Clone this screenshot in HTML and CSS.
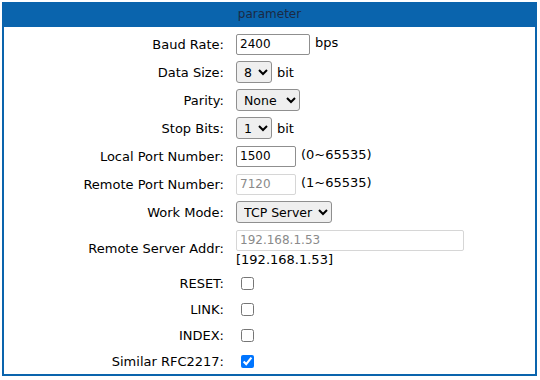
FILE: index.html
```html
<!doctype html>
<html lang="en">
  <head>
    <meta charset="UTF-8" />
    <meta name="viewport" content="width=device-width, initial-scale=1.0" />
    <title>Serial parameter</title>
    <link rel="stylesheet" href="styles.css">
  </head>
  <body>
    <div class="panel">
      <div class="panel-title">parameter</div>
      <form class="params">
        <div class="row">
          <label for="baud">Baud Rate:</label>
          <div class="field">
            <input type="text" id="baud" class="w-baud" value="2400" />
            <span class="unit raised">bps</span>
          </div>
        </div>
        <div class="row">
          <label for="datasize">Data Size:</label>
          <div class="field">
            <select id="datasize" class="w-small"><option>8</option><option>7</option></select>
            <span class="unit">bit</span>
          </div>
        </div>
        <div class="row">
          <label for="parity">Parity:</label>
          <div class="field">
            <select id="parity" class="w-parity"><option>None</option><option>Odd</option><option>Even</option></select>
          </div>
        </div>
        <div class="row">
          <label for="stopbits">Stop Bits:</label>
          <div class="field">
            <select id="stopbits" class="w-small"><option>1</option><option>2</option></select>
            <span class="unit">bit</span>
          </div>
        </div>
        <div class="row">
          <label for="localport">Local Port Number:</label>
          <div class="field">
            <input type="text" id="localport" class="w-port" value="1500" />
            <span class="unit raised">(0~65535)</span>
          </div>
        </div>
        <div class="row">
          <label for="remoteport">Remote Port Number:</label>
          <div class="field">
            <input type="text" id="remoteport" class="w-port" value="7120" disabled />
            <span class="unit raised">(1~65535)</span>
          </div>
        </div>
        <div class="row">
          <label for="workmode">Work Mode:</label>
          <div class="field">
            <select id="workmode" class="w-mode"><option>TCP Server</option><option>TCP Client</option><option>UDP</option></select>
          </div>
        </div>
        <div class="row row-tall">
          <label for="remoteaddr">Remote Server Addr:</label>
          <div class="field stack">
            <input type="text" id="remoteaddr" class="w-addr" value="192.168.1.53" disabled />
            <span class="current">[192.168.1.53]</span>
          </div>
        </div>
        <div class="row row-check">
          <label for="reset">RESET:</label>
          <div class="field"><input type="checkbox" id="reset" /></div>
        </div>
        <div class="row row-check">
          <label for="link">LINK:</label>
          <div class="field"><input type="checkbox" id="link" /></div>
        </div>
        <div class="row row-check">
          <label for="index">INDEX:</label>
          <div class="field"><input type="checkbox" id="index" /></div>
        </div>
        <div class="row row-check">
          <label for="rfc2217">Similar RFC2217:</label>
          <div class="field"><input type="checkbox" id="rfc2217" checked /></div>
        </div>
      </form>
    </div>
  </body>
</html>
```

FILE: styles.css
```css
body {
  margin: 0;
  padding: 2px;
  font-family: "DejaVu Sans", Verdana, sans-serif;
  font-size: 13px;
  color: #000;
  background-color: #fff;
}

.panel {
  width: 531px;
  border: 2px solid #0a64ad;
  border-top: none;
}

.panel-title {
  height: 25px;
  line-height: 25px;
  background-color: #0a64ad;
  color: #1b2a44;
  font-size: 12px;
  text-align: center;
}

.params {
  margin: 0;
  padding-top: 3px;
}

.row {
  display: grid;
  grid-template-columns: 220px 1fr;
  column-gap: 12px;
  align-items: center;
  height: 28px;
}

.row label {
  text-align: right;
}

.row-tall {
  height: 44px;
}

.row-check {
  height: 26px;
}

.field {
  display: flex;
  align-items: center;
  gap: 5px;
}

.field.stack {
  flex-direction: column;
  align-items: flex-start;
  gap: 0;
}

.field input[type='text'] {
  font-family: "DejaVu Sans", Verdana, sans-serif;
  font-size: 12px;
  height: 21px;
  box-sizing: border-box;
  padding: 1px 3px;
  border: 1px solid #8f8f8f;
  border-radius: 2px;
}

.field input[type='text']:disabled {
  color: #8a8a8a;
  background-color: #fff;
  border-color: #d6d6d6;
}

.field select {
  font-family: "DejaVu Sans", Verdana, sans-serif;
  font-size: 12.5px;
  height: 22px;
  padding: 0 1px 0 3px;
  background-color: #efefef;
  border: 1px solid #8f8f8f;
  border-radius: 3px;
}

.field input[type='checkbox'] {
  margin: 0 0 0 5px;
  width: 13px;
  height: 13px;
}

.w-baud {
  width: 74px;
}

.w-port {
  width: 60px;
}

.w-addr {
  width: 228px;
}

.w-small {
  width: 36px;
}

.w-parity {
  width: 64px;
}

.w-mode {
  width: 96px;
}

.unit.raised {
  align-self: flex-start;
  margin-top: 1px;
}

.current {
  margin-top: 1px;
}
```
